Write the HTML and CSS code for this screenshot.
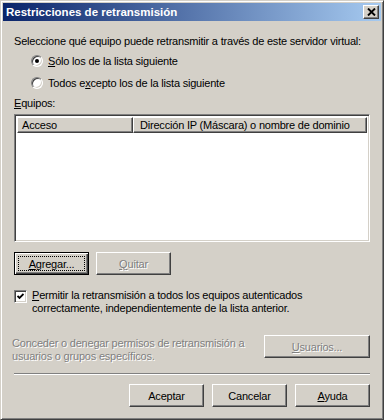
FILE: index.html
```html
<!DOCTYPE html>
<html lang="es">

    <head>
        <meta charset="UTF-8">
        <meta name="viewport" content="width=device-width, initial-scale=1.0">
        <title>Restricciones de retransmisión</title>
        <link rel="stylesheet" href="styles.css">
    </head>

    <body>

        <div class="window">
            <div class="titlebar">
                <span class="title">Restricciones de retransmisión</span>
                <span class="close-btn">
                    <svg width="9" height="8" viewBox="0 0 9 8">
                        <path d="M1 0.5 L8 7.5 M8 0.5 L1 7.5" stroke="#000" stroke-width="1.9" fill="none"/>
                    </svg>
                </span>
            </div>

            <div class="content">
                <p class="intro">Seleccione qué equipo puede retransmitir a través de este servidor virtual:</p>

                <div class="radio-group">
                    <div class="radio-row">
                        <span class="radio checked"></span>
                        <span><u>S</u>ólo los de la lista siguiente</span>
                    </div>
                    <div class="radio-row">
                        <span class="radio"></span>
                        <span>Todos e<u>x</u>cepto los de la lista siguiente</span>
                    </div>
                </div>

                <p class="list-label"><u>E</u>quipos:</p>
                <div class="listview">
                    <div class="list-header">
                        <div class="col col-access">Acceso</div>
                        <div class="col col-ip">Dirección IP (Máscara) o nombre de dominio</div>
                    </div>
                </div>

                <div class="button-row">
                    <button class="btn default"><span class="focus"><u>A</u>gregar...</span></button>
                    <button class="btn disabled"><u>Q</u>uitar</button>
                </div>

                <div class="check-row">
                    <span class="checkbox">
                        <svg width="7" height="7" viewBox="0 0 7 7">
                            <path d="M0.5 3 L2.5 5 L6.5 1" stroke="#000" stroke-width="1.8" fill="none"/>
                        </svg>
                    </span>
                    <span class="check-text"><u>P</u>ermitir la retransmisión a todos los equipos autenticados<br>correctamente, independientemente de la lista anterior.</span>
                </div>

                <div class="users-row">
                    <p class="disabled-text">Conceder o denegar permisos de retransmisión a<br>usuarios o grupos específicos.</p>
                    <button class="btn disabled users-btn"><u>U</u>suarios...</button>
                </div>

                <div class="separator"></div>

                <div class="dialog-buttons">
                    <button class="btn">Aceptar</button>
                    <button class="btn">Cancelar</button>
                    <button class="btn"><u>A</u>yuda</button>
                </div>
            </div>
        </div>

    </body>

</html>
```

FILE: styles.css
```css
body {
    margin: 0;
    background-color: #d4d0c8;
    font-family: "Liberation Sans", Arial, sans-serif;
    font-size: 11px;
    letter-spacing: -0.2px;
    color: #000;
}

p {
    margin: 0;
}

.window {
    width: 384px;
    height: 420px;
    box-sizing: border-box;
    padding: 2px;
    background-color: #d4d0c8;
    border: 1px solid;
    border-color: #d4d0c8 #404040 #404040 #d4d0c8;
    box-shadow: inset 1px 1px #fff, inset -1px -1px #808080;
}

.titlebar {
    height: 18px;
    display: flex;
    align-items: center;
    justify-content: space-between;
    padding: 0 2px 0 3px;
    background: linear-gradient(to right, #0a246a, #a6caf0);
}

.title {
    color: #fff;
    font-weight: bold;
    font-size: 11.5px;
    letter-spacing: 0;
}

.close-btn {
    width: 14px;
    height: 12px;
    display: flex;
    align-items: center;
    justify-content: center;
    background-color: #d4d0c8;
    border: 1px solid;
    border-color: #fff #404040 #404040 #fff;
    box-shadow: inset -1px -1px #808080;
}

.content {
    padding: 14px 11px 0 11px;
}

.intro {
    line-height: 13px;
}

.radio-group {
    margin-top: 6px;
    padding-left: 17px;
    display: flex;
    flex-direction: column;
    gap: 8px;
}

.radio-row {
    height: 14px;
    display: flex;
    align-items: center;
    gap: 5px;
}

.radio {
    width: 10px;
    height: 10px;
    border-radius: 50%;
    background-color: #fff;
    border: 1px solid;
    border-color: #808080 #fff #fff #808080;
    box-shadow: inset 1px 1px #404040, inset -1px -1px #d4d0c8;
    display: flex;
    align-items: center;
    justify-content: center;
}

.radio.checked::after {
    content: "";
    width: 4px;
    height: 4px;
    border-radius: 50%;
    background-color: #000;
}

.list-label {
    margin-top: 7px;
    line-height: 13px;
}

.listview {
    margin-top: 4px;
    height: 128px;
    box-sizing: border-box;
    background-color: #fff;
    border: 1px solid;
    border-color: #808080 #fff #fff #808080;
    box-shadow: inset 1px 1px #404040, inset -1px -1px #d4d0c8;
    padding: 2px;
}

.list-header {
    display: flex;
    height: 16px;
}

.col {
    box-sizing: border-box;
    height: 16px;
    line-height: 14px;
    padding-left: 4px;
    background-color: #d4d0c8;
    border: 1px solid;
    border-color: #fff #404040 #404040 #fff;
    box-shadow: inset -1px -1px #808080;
    white-space: nowrap;
}

.col-access {
    width: 116px;
}

.col-ip {
    flex: 1;
    padding-left: 6px;
}

.btn {
    box-sizing: border-box;
    width: 75px;
    height: 23px;
    padding: 0;
    font-family: inherit;
    font-size: 11px;
    letter-spacing: -0.2px;
    color: #000;
    background-color: #d4d0c8;
    border: 1px solid;
    border-color: #fff #404040 #404040 #fff;
    box-shadow: inset -1px -1px #808080;
    border-radius: 0;
}

.btn.default {
    border: 1px solid #000;
    box-shadow: inset 1px 1px #fff, inset -1px -1px #404040, inset -2px -2px #808080;
    display: flex;
    align-items: stretch;
    padding: 3px;
}

.focus {
    flex: 1;
    display: flex;
    align-items: center;
    justify-content: center;
    border: 1px dotted #000;
}

.btn.disabled {
    color: #808080;
    text-shadow: 1px 1px #fff;
}

.button-row {
    margin-top: 10px;
    display: flex;
    gap: 7px;
}

.check-row {
    margin-top: 14px;
    display: flex;
    align-items: flex-start;
    gap: 5px;
}

.checkbox {
    flex: none;
    width: 11px;
    height: 11px;
    margin-top: 1px;
    background-color: #fff;
    border: 1px solid;
    border-color: #808080 #fff #fff #808080;
    box-shadow: inset 1px 1px #404040, inset -1px -1px #d4d0c8;
    display: flex;
    align-items: center;
    justify-content: center;
}

.check-text {
    line-height: 13px;
}

.users-row {
    margin-top: 20px;
    display: flex;
    justify-content: space-between;
    align-items: flex-start;
}

.disabled-text {
    margin: 2px 0 0 -2px;
    line-height: 13px;
    color: #808080;
    text-shadow: 1px 1px #fff;
}

.users-btn {
    width: 106px;
}

.separator {
    margin-top: 10px;
    height: 0;
    border-top: 1px solid #808080;
    border-bottom: 1px solid #fff;
}

.dialog-buttons {
    margin-top: 9px;
    display: flex;
    justify-content: flex-end;
    gap: 8px;
}
```
